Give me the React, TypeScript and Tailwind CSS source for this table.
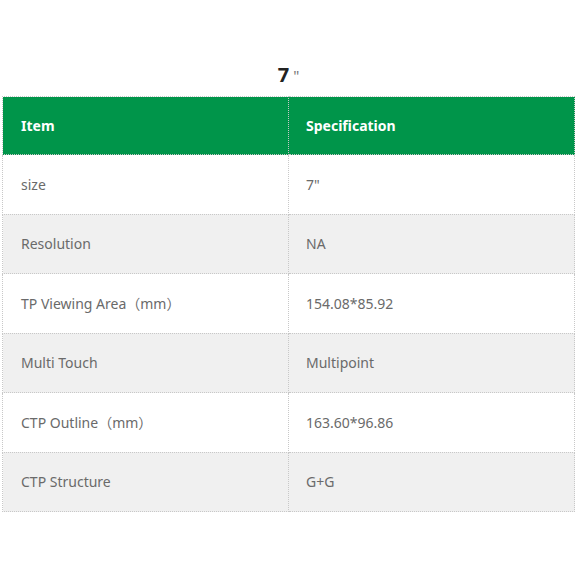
import React from "react";

const rows: [string, string][] = [
  ["size", "7\""],
  ["Resolution", "NA"],
  ["TP Viewing Area（mm）", "154.08*85.92"],
  ["Multi Touch", "Multipoint"],
  ["CTP Outline（mm）", "163.60*96.86"],
  ["CTP Structure", "G+G"],
];

export default function App() {
  return (
    <div
      className="w-[577px] h-[577px] bg-white"
      style={{ fontFamily: '"Noto Sans", "Noto Sans CJK SC", sans-serif' }}
    >
      <div className="pt-[62px] h-[96px] text-center">
        <span className="text-[20px] leading-[26px] font-bold text-[#222]">7</span>
        <span className="text-[15px] leading-[26px] text-[#777] ml-[4px] align-top">"</span>
      </div>
      <table className="ml-[2px] w-[573px] border-collapse table-fixed">
        <thead>
          <tr className="h-[58px] bg-[#00954a]">
            <th className="w-1/2 border border-dotted border-[#c8c8c8] pl-[18px] text-left text-[14px] font-bold text-white">
              Item
            </th>
            <th className="w-1/2 border border-dotted border-[#c8c8c8] pl-[17px] text-left text-[14px] font-bold text-white">
              Specification
            </th>
          </tr>
        </thead>
        <tbody>
          {rows.map(([a, b], i) => (
            <tr key={a} className={i % 2 === 0 ? "h-[59.5px] bg-white" : "h-[59.5px] bg-[#f0f0f0]"}>
              <td className="border border-dotted border-[#c8c8c8] pl-[18px] text-[14px] text-[#6a6a6a]">{a}</td>
              <td className="border border-dotted border-[#c8c8c8] pl-[17px] text-[14px] text-[#6a6a6a]">{b}</td>
            </tr>
          ))}
        </tbody>
      </table>
    </div>
  );
}
